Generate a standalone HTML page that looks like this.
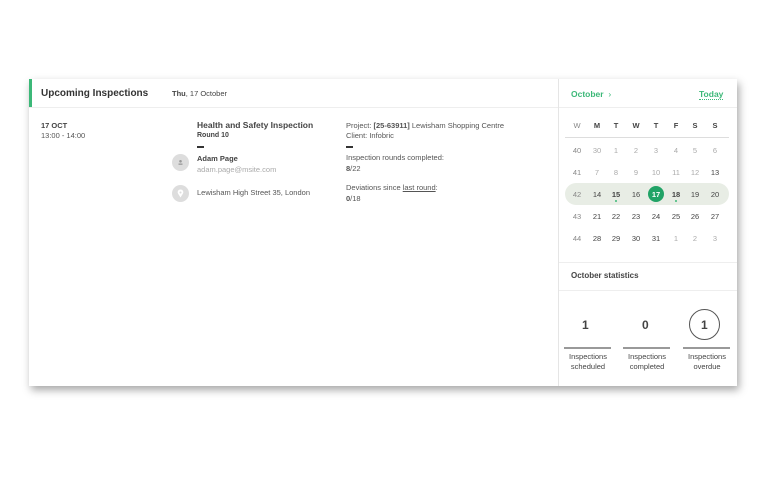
<!DOCTYPE html>
<html><head><style>
body{margin:0;width:768px;height:480px;background:#fff;font-family:"Liberation Sans",sans-serif;position:relative;overflow:hidden;color:#333}
.a{position:absolute;white-space:nowrap}
.card{position:absolute;left:29px;top:79px;width:708px;height:307px;background:#fff;box-shadow:2px 4px 8px rgba(0,0,0,.35)}
.c{position:absolute;width:20px;text-align:center;font-size:7.5px;color:#444}
.s{font-size:7.5px;color:#444;text-align:center;width:48px}
</style></head><body>
<div class="card"></div>
<div class="a" style="left:29px;top:79px;width:3px;height:29px;background:#3cb878"></div>
<div class="a" style="left:29px;top:107px;width:529px;height:1px;background:#eee"></div>
<div class="a" style="left:558px;top:79px;width:1px;height:307px;background:#e5e5e5"></div>
<div class="a" style="left:41px;top:88px;font-size:10px;font-weight:bold;color:#333">Upcoming Inspections</div>
<div class="a" style="left:172px;top:89px;font-size:7.5px;color:#444"><b>Thu</b>, 17 October</div>
<div class="a" style="left:41px;top:121px;font-size:7.5px;font-weight:bold;color:#444">17 OCT</div>
<div class="a" style="left:41px;top:131px;font-size:7.5px;color:#555">13:00 - 14:00</div>
<div class="a" style="left:197px;top:120px;font-size:8.5px;font-weight:bold;color:#444">Health and Safety Inspection</div>
<div class="a" style="left:197px;top:132px;font-size:7px;font-weight:bold;color:#444">Round 10</div>
<div class="a" style="left:197px;top:146px;width:7px;height:1.5px;background:#333"></div>
<div class="a" style="left:172px;top:154px;width:17px;height:17px;border-radius:50%;background:#ddd"></div>
<svg class="a" style="left:172px;top:154px" width="17" height="17"><circle cx="8.5" cy="7.3" r="1.3" fill="#999"/><rect x="6.5" y="9.5" width="4" height="1.3" fill="#999"/></svg>
<div class="a" style="left:197px;top:154px;font-size:7.5px;font-weight:bold;color:#444">Adam Page</div>
<div class="a" style="left:197px;top:165px;font-size:7.5px;color:#aaa">adam.page@msite.com</div>
<div class="a" style="left:172px;top:185px;width:17px;height:17px;border-radius:50%;background:#ddd"></div>
<svg class="a" style="left:172px;top:185px" width="17" height="17"><path d="M8.5 12.5 L6 8.5 A2.8 2.8 0 1 1 11 8.5 Z" fill="#fff"/><circle cx="8.5" cy="7.5" r="1" fill="#ddd"/></svg>
<div class="a" style="left:197px;top:188px;font-size:7.5px;color:#555">Lewisham High Street 35, London</div>
<div class="a" style="left:346px;top:121px;font-size:7.5px;color:#555">Project: <b>[25-63911]</b> Lewisham Shopping Centre</div>
<div class="a" style="left:346px;top:131px;font-size:7.5px;color:#555">Client: Infobric</div>
<div class="a" style="left:346px;top:146px;width:7px;height:1.5px;background:#333"></div>
<div class="a" style="left:346px;top:153px;font-size:7.5px;color:#555">Inspection rounds completed:</div>
<div class="a" style="left:346px;top:164px;font-size:7.5px;color:#555"><b>8</b>/22</div>
<div class="a" style="left:346px;top:183px;font-size:7.5px;color:#555">Deviations since <u>last round</u>:</div>
<div class="a" style="left:346px;top:194px;font-size:7.5px;color:#555"><b>0</b>/18</div>

<div class="a" style="left:571px;top:89px;font-size:8.5px;font-weight:bold;color:#3cb878">October &nbsp;<span style="font-weight:normal">›</span></div>
<div class="a" style="left:699px;top:89px;font-size:8.5px;font-weight:bold;color:#3cb878;border-bottom:1px dotted #3cb878">Today</div>
<div class="a" style="left:559px;top:107px;width:178px;height:1px;background:#eee"></div>
<div class="a" style="left:565px;top:137px;width:164px;height:1px;background:#ddd"></div>
<div class="a" style="left:565px;top:183px;width:164px;height:22px;border-radius:11px;background:#e8ede5"></div>
<div class="a" style="left:648px;top:186px;width:16px;height:16px;border-radius:50%;background:#21a366"></div>
<div class="a" style="left:615px;top:200px;width:2px;height:2px;border-radius:50%;background:#3cb878"></div>
<div class="a" style="left:675px;top:200px;width:2px;height:2px;border-radius:50%;background:#3cb878"></div>
<div id="cal"></div>
<div class="a" style="left:559px;top:262px;width:178px;height:1px;background:#eee"></div>
<div class="a" style="left:571px;top:271px;font-size:8px;font-weight:bold;color:#444">October statistics</div>
<div class="a" style="left:559px;top:290px;width:178px;height:1px;background:#eee"></div>
<div class="a" style="left:582px;top:318px;font-size:12px;font-weight:bold;color:#444">1</div>
<div class="a" style="left:642px;top:318px;font-size:12px;font-weight:bold;color:#444">0</div>
<div class="a" style="left:689px;top:309px;width:29px;height:29px;border:1.5px solid #555;border-radius:50%"></div>
<div class="a" style="left:701px;top:318px;font-size:12px;font-weight:bold;color:#444">1</div>
<div class="a" style="left:564px;top:347px;width:47px;height:2px;background:#999"></div>
<div class="a" style="left:623px;top:347px;width:47px;height:2px;background:#999"></div>
<div class="a" style="left:683px;top:347px;width:47px;height:2px;background:#999"></div>
<div class="a s" style="left:564px;top:352px;line-height:10px">Inspections<br>scheduled</div>
<div class="a s" style="left:623px;top:352px;line-height:10px">Inspections<br>completed</div>
<div class="a s" style="left:683px;top:352px;line-height:10px">Inspections<br>overdue</div>
<script>
var xs=[577,597,616,636,656,676,695,715],h='';
var hd=['W','M','T','W','T','F','S','S'];
hd.forEach((t,i)=>h+=`<div class="c" style="left:${xs[i]-10}px;top:121px;font-weight:${i?'bold':'normal'};color:${i?'#444':'#888'}">${t}</div>`);
var rows=[[40,30,1,2,3,4,5,6],[41,7,8,9,10,11,12,13],[42,14,15,16,17,18,19,20],[43,21,22,23,24,25,26,27],[44,28,29,30,31,1,2,3]];
var ys=[146,168,190,212,234];
rows.forEach((r,ri)=>r.forEach((d,i)=>{var st='';
if(i==0)st='color:#888';
else if(ri==0||(ri==1&&i<7)||(ri==4&&i>4))st='color:#aaa';
if(ri==2&&(i==2||i==5))st='font-weight:bold';
if(ri==2&&i==4)st='color:#fff;font-weight:bold';
h+=`<div class="c" style="left:${xs[i]-10}px;top:${ys[ri]}px;${st}">${d}</div>`;}));
document.getElementById('cal').innerHTML=h;
</script>
</body></html>
